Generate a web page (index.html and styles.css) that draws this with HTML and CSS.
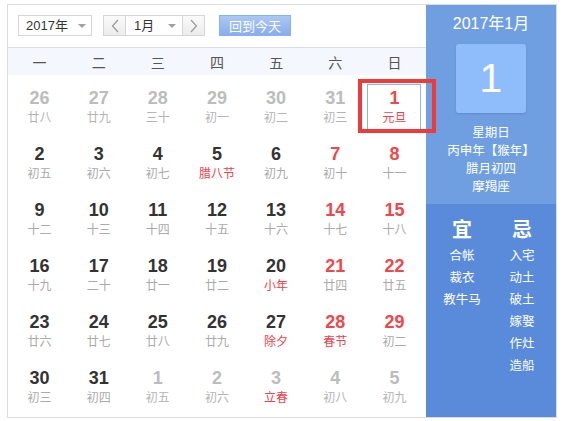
FILE: index.html
```html
<!DOCTYPE html>
<html lang="zh">
<head>
<meta charset="utf-8">
<title>万年历</title>
<link rel="stylesheet" href="styles.css">
</head>
<body>
<div class="cal-wrap">
  <div class="cal-main">
    <div class="toolbar">
      <div class="select year"><span>2017年</span><i class="caret"></i></div>
      <div class="month-group">
        <div class="nav"><svg width="8" height="14" viewBox="0 0 8 14"><path d="M7 1 L1.5 7 L7 13" fill="none" stroke="#999" stroke-width="1.2"/></svg></div>
        <div class="select month"><span>1月</span><i class="caret"></i></div>
        <div class="nav"><svg width="8" height="14" viewBox="0 0 8 14"><path d="M1 1 L6.5 7 L1 13" fill="none" stroke="#999" stroke-width="1.2"/></svg></div>
      </div>
      <div class="today">回到今天</div>
    </div>
    <div class="weekhead">
      <span>一</span><span>二</span><span>三</span><span>四</span><span>五</span><span>六</span><span>日</span>
    </div>
    <div class="days">
      <div class="day other"><b>26</b><em>廿八</em></div>
      <div class="day other"><b>27</b><em>廿九</em></div>
      <div class="day other"><b>28</b><em>三十</em></div>
      <div class="day other"><b>29</b><em>初一</em></div>
      <div class="day other"><b>30</b><em>初二</em></div>
      <div class="day other"><b>31</b><em>初三</em></div>
      <div class="day wkend fest selected"><b>1</b><em>元旦</em></div>

      <div class="day"><b>2</b><em>初五</em></div>
      <div class="day"><b>3</b><em>初六</em></div>
      <div class="day"><b>4</b><em>初七</em></div>
      <div class="day fest"><b>5</b><em>腊八节</em></div>
      <div class="day"><b>6</b><em>初九</em></div>
      <div class="day wkend"><b>7</b><em>初十</em></div>
      <div class="day wkend"><b>8</b><em>十一</em></div>

      <div class="day"><b>9</b><em>十二</em></div>
      <div class="day"><b>10</b><em>十三</em></div>
      <div class="day"><b>11</b><em>十四</em></div>
      <div class="day"><b>12</b><em>十五</em></div>
      <div class="day"><b>13</b><em>十六</em></div>
      <div class="day wkend"><b>14</b><em>十七</em></div>
      <div class="day wkend"><b>15</b><em>十八</em></div>

      <div class="day"><b>16</b><em>十九</em></div>
      <div class="day"><b>17</b><em>二十</em></div>
      <div class="day"><b>18</b><em>廿一</em></div>
      <div class="day"><b>19</b><em>廿二</em></div>
      <div class="day fest"><b>20</b><em>小年</em></div>
      <div class="day wkend"><b>21</b><em>廿四</em></div>
      <div class="day wkend"><b>22</b><em>廿五</em></div>

      <div class="day"><b>23</b><em>廿六</em></div>
      <div class="day"><b>24</b><em>廿七</em></div>
      <div class="day"><b>25</b><em>廿八</em></div>
      <div class="day"><b>26</b><em>廿九</em></div>
      <div class="day fest"><b>27</b><em>除夕</em></div>
      <div class="day wkend fest"><b>28</b><em>春节</em></div>
      <div class="day wkend"><b>29</b><em>初二</em></div>

      <div class="day"><b>30</b><em>初三</em></div>
      <div class="day"><b>31</b><em>初四</em></div>
      <div class="day other"><b>1</b><em>初五</em></div>
      <div class="day other"><b>2</b><em>初六</em></div>
      <div class="day other fest"><b>3</b><em>立春</em></div>
      <div class="day other"><b>4</b><em>初八</em></div>
      <div class="day other"><b>5</b><em>初九</em></div>
    </div>
  </div>
  <div class="side">
    <div class="side-top">
      <div class="ym">2017年1月</div>
      <div class="bigday">1</div>
      <div class="info">
        <p>星期日</p>
        <p>丙申年【猴年】</p>
        <p>腊月初四</p>
        <p>摩羯座</p>
      </div>
    </div>
    <div class="side-bottom">
      <div class="yj">
        <h3>宜</h3>
        <p>合帐</p><p>裁衣</p><p>教牛马</p>
      </div>
      <div class="yj">
        <h3>忌</h3>
        <p>入宅</p><p>动土</p><p>破土</p><p>嫁娶</p><p>作灶</p><p>造船</p>
      </div>
    </div>
  </div>
  <div class="annot"></div>
</div>
</body>
</html>
```

FILE: styles.css
```css
* { box-sizing: border-box; }
html, body { margin: 0; padding: 0; background: #fff; }
body {
  font-family: "Liberation Sans", "Noto Sans CJK SC", Arial, sans-serif;
  color: #333;
}
.cal-wrap {
  position: relative;
  display: flex;
  margin: 4px 0 0 7px;
  width: 550px;
  height: 414px;
  border: 1px solid #dcdcdc;
}
.cal-main {
  width: 418px;
  display: flex;
  flex-direction: column;
}
.toolbar {
  height: 43px;
  border-bottom: 1px solid #dcdcdc;
  display: flex;
  align-items: flex-start;
  padding: 10px 0 0 10px;
}
.select {
  position: relative;
  height: 21px;
  background: #fff;
  border: 1px solid #d6d6d6;
  font-size: 13px;
  line-height: 19px;
  color: #333;
  padding-left: 7px;
}
.select span { font-family: "Liberation Sans", "Noto Sans CJK SC", sans-serif; }
.caret {
  position: absolute;
  right: 5px;
  top: 8px;
  width: 0;
  height: 0;
  border-left: 4px solid transparent;
  border-right: 4px solid transparent;
  border-top: 4px solid #a0a0a0;
}
.year { width: 74px; }
.month-group {
  margin-left: 11px;
  display: flex;
  height: 21px;
  border: 1px solid #d6d6d6;
}
.month-group .select {
  border: none;
  border-left: 1px solid #d6d6d6;
  border-right: 1px solid #d6d6d6;
  height: 19px;
  width: 58px;
  line-height: 19px;
  padding-left: 8px;
}
.month-group .caret { right: 6px; top: 8px; }
.nav {
  width: 21px;
  height: 19px;
  background: linear-gradient(#fafafa, #ececec);
  display: flex;
  align-items: center;
  justify-content: center;
}
.today {
  margin-left: 14px;
  width: 72px;
  height: 21px;
  border: 1px solid #8db0ec;
  background: linear-gradient(#abc7f3, #88adee);
  color: #fff;
  font-size: 13px;
  line-height: 19px;
  text-align: center;
  font-family: "Noto Sans CJK SC", sans-serif;
}
.weekhead {
  height: 27px;
  background: #f4f7fe;
  display: grid;
  grid-template-columns: repeat(7, 1fr);
  padding: 0 2px;
  align-items: center;
  text-align: center;
  font-family: "Noto Sans CJK SC", sans-serif;
  font-size: 14px;
  color: #555;
}
.days {
  flex: 1;
  display: grid;
  grid-template-columns: repeat(7, 1fr);
  grid-auto-rows: 56px;
  padding: 4px 2px 0 2px;
}
.day {
  display: flex;
  flex-direction: column;
  align-items: center;
  width: 54px;
  height: 46px;
  margin: 5px auto 0;
  padding-top: 3px;
  border: 1px solid transparent;
}
.day b {
  font-family: "Liberation Sans", Arial, sans-serif;
  font-weight: bold;
  font-size: 18px;
  line-height: 21px;
  color: #333;
}
.day em {
  font-style: normal;
  font-family: "Noto Sans CJK SC", sans-serif;
  font-size: 12px;
  line-height: 16px;
  color: #aaa;
}
.day.wkend b { color: #f0474a; }
.day.fest em { color: #f0404a; }
.day.other b { color: #bcbcbc; }
.day.other em { color: #b4b4b4; }
.day.other.fest em { color: #f0404a; }
.day.selected { border-color: #8cb5f2; }
.side {
  width: 130px;
  display: flex;
  flex-direction: column;
  color: #fff;
  font-family: "Noto Sans CJK SC", sans-serif;
  text-align: center;
}
.side-top {
  height: 199px;
  background: #6f9fe0;
  display: flex;
  flex-direction: column;
  align-items: center;
  padding-top: 8px;
}
.ym {
  font-family: "Liberation Sans", "Noto Sans CJK SC", sans-serif;
  font-size: 16px;
  line-height: 22px;
}
.bigday {
  margin-top: 9px;
  width: 70px;
  height: 69px;
  border-radius: 3px;
  background: #8fbdfc;
  box-shadow: 0 1px 2px rgba(60, 100, 170, 0.35);
  font-family: "Liberation Sans", Arial, sans-serif;
  font-size: 41px;
  line-height: 69px;
}
.info { margin-top: 10px; }
.info p {
  margin: 0;
  font-size: 12.5px;
  line-height: 18px;
}
.side-bottom {
  flex: 1;
  background: #5a8bdb;
  display: grid;
  grid-template-columns: 1fr 1fr;
  padding: 12px 4px 0 6px;
  align-content: start;
}
.yj h3 {
  margin: 0 0 2px;
  font-size: 20px;
  line-height: 26px;
  font-weight: bold;
}
.yj p {
  margin: 0;
  font-size: 12.5px;
  line-height: 22px;
}
.annot {
  position: absolute;
  left: 350px;
  top: 74px;
  width: 78px;
  height: 54px;
  border: 4px solid #f03a3a;
}
```
